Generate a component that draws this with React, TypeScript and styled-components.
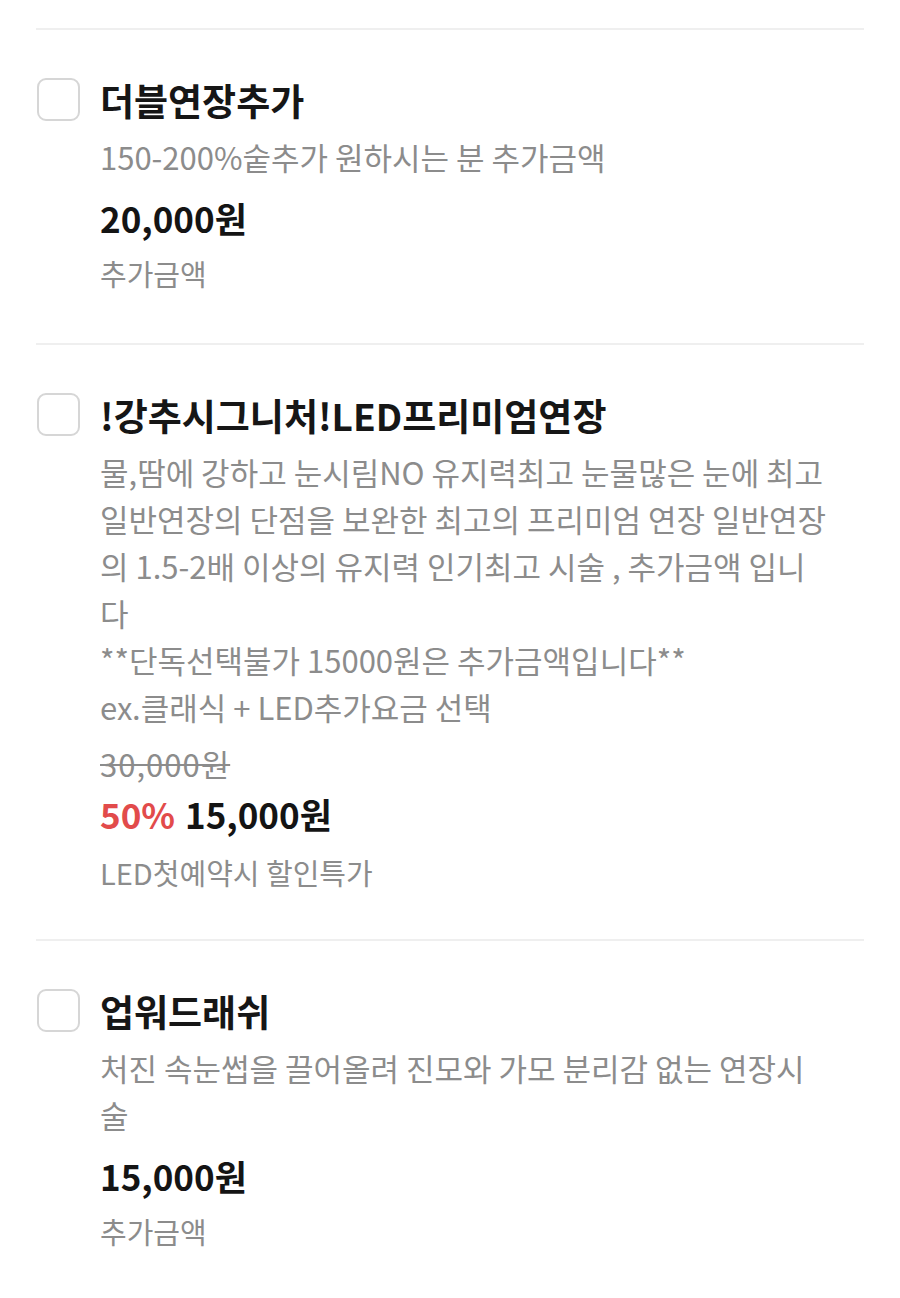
import { FC } from 'react';
import styled, { createGlobalStyle } from 'styled-components';

const GlobalStyle = createGlobalStyle`
  html, body {
    margin: 0;
    padding: 0;
    background: #ffffff;
  }
  body {
    font-family: "Noto Sans CJK KR", "Noto Sans", sans-serif;
    -webkit-font-smoothing: antialiased;
  }
`;

type Option = {
  title: string;
  desc: string;
  price: string;
  original?: string;
  discount?: string;
  note: string;
};

const options: Option[] = [
  {
    title: '더블연장추가',
    desc: '150-200%숱추가 원하시는 분 추가금액',
    price: '20,000원',
    note: '추가금액',
  },
  {
    title: '!강추시그니처!LED프리미엄연장',
    desc:
      '물,땀에 강하고 눈시림NO 유지력최고 눈물많은 눈에 최고\n' +
      '일반연장의 단점을 보완한 최고의 프리미엄 연장 일반연장\n' +
      '의 1.5-2배 이상의 유지력 인기최고 시술 , 추가금액 입니\n' +
      '다\n' +
      '**단독선택불가 15000원은 추가금액입니다**\n' +
      'ex.클래식 + LED추가요금 선택',
    original: '30,000원',
    discount: '50%',
    price: '15,000원',
    note: 'LED첫예약시 할인특가',
  },
  {
    title: '업워드래쉬',
    desc: '처진 속눈썹을 끌어올려 진모와 가모 분리감 없는 연장시\n술',
    price: '15,000원',
    note: '추가금액',
  },
];

const Page = styled.div`
  padding: 28px 36px 0;
`;

const Section = styled.section<{ $bottom: number }>`
  display: flex;
  gap: 20px;
  border-top: 2px solid #efefef;
  padding: 48px 0 ${(p) => p.$bottom}px 1px;
`;

const CheckBox = styled.span`
  flex: none;
  width: 39px;
  height: 39px;
  border: 2px solid #d6d6d6;
  border-radius: 9px;
`;

const Content = styled.div`
  display: flex;
  flex-direction: column;
  min-width: 0;
`;

const Title = styled.h3`
  margin: 0;
  font-size: 37px;
  line-height: 44px;
  font-weight: 700;
  color: #161616;
`;

const Desc = styled.p`
  margin: 11px 0 0;
  font-size: 31px;
  line-height: 47px;
  color: #8c8c8c;
  white-space: pre;
`;

const Original = styled.div`
  margin-top: 16px;
  font-size: 31px;
  line-height: 36px;
  letter-spacing: 1px;
  color: #8c8c8c;
  text-decoration: line-through;
  text-decoration-thickness: 2px;
`;

const PriceRow = styled.div<{ $gap: number }>`
  display: flex;
  gap: 10px;
  margin-top: ${(p) => p.$gap}px;
  font-size: 35px;
  line-height: 40px;
  font-weight: 700;
  color: #141414;
`;

const Discount = styled.span`
  color: #e24b4b;
`;

const Note = styled.div<{ $gap: number }>`
  margin-top: ${(p) => p.$gap}px;
  font-size: 29px;
  line-height: 40px;
  color: #8c8c8c;
`;

const OptionItem: FC<{ item: Option }> = ({ item }) => {
  const sale = Boolean(item.original);
  return (
    <Section $bottom={sale ? 47 : 50}>
      <CheckBox />
      <Content>
        <Title>{item.title}</Title>
        <Desc>{item.desc}</Desc>
        {item.original && <Original>{item.original}</Original>}
        <PriceRow $gap={sale ? 12 : 18}>
          {item.discount && <Discount>{item.discount}</Discount>}
          <span>{item.price}</span>
        </PriceRow>
        <Note $gap={sale ? 18 : 15}>{item.note}</Note>
      </Content>
    </Section>
  );
};

const App: FC = () => (
  <>
    <GlobalStyle />
    <Page>
      {options.map((o) => (
        <OptionItem key={o.title} item={o} />
      ))}
    </Page>
  </>
);

export default App;
